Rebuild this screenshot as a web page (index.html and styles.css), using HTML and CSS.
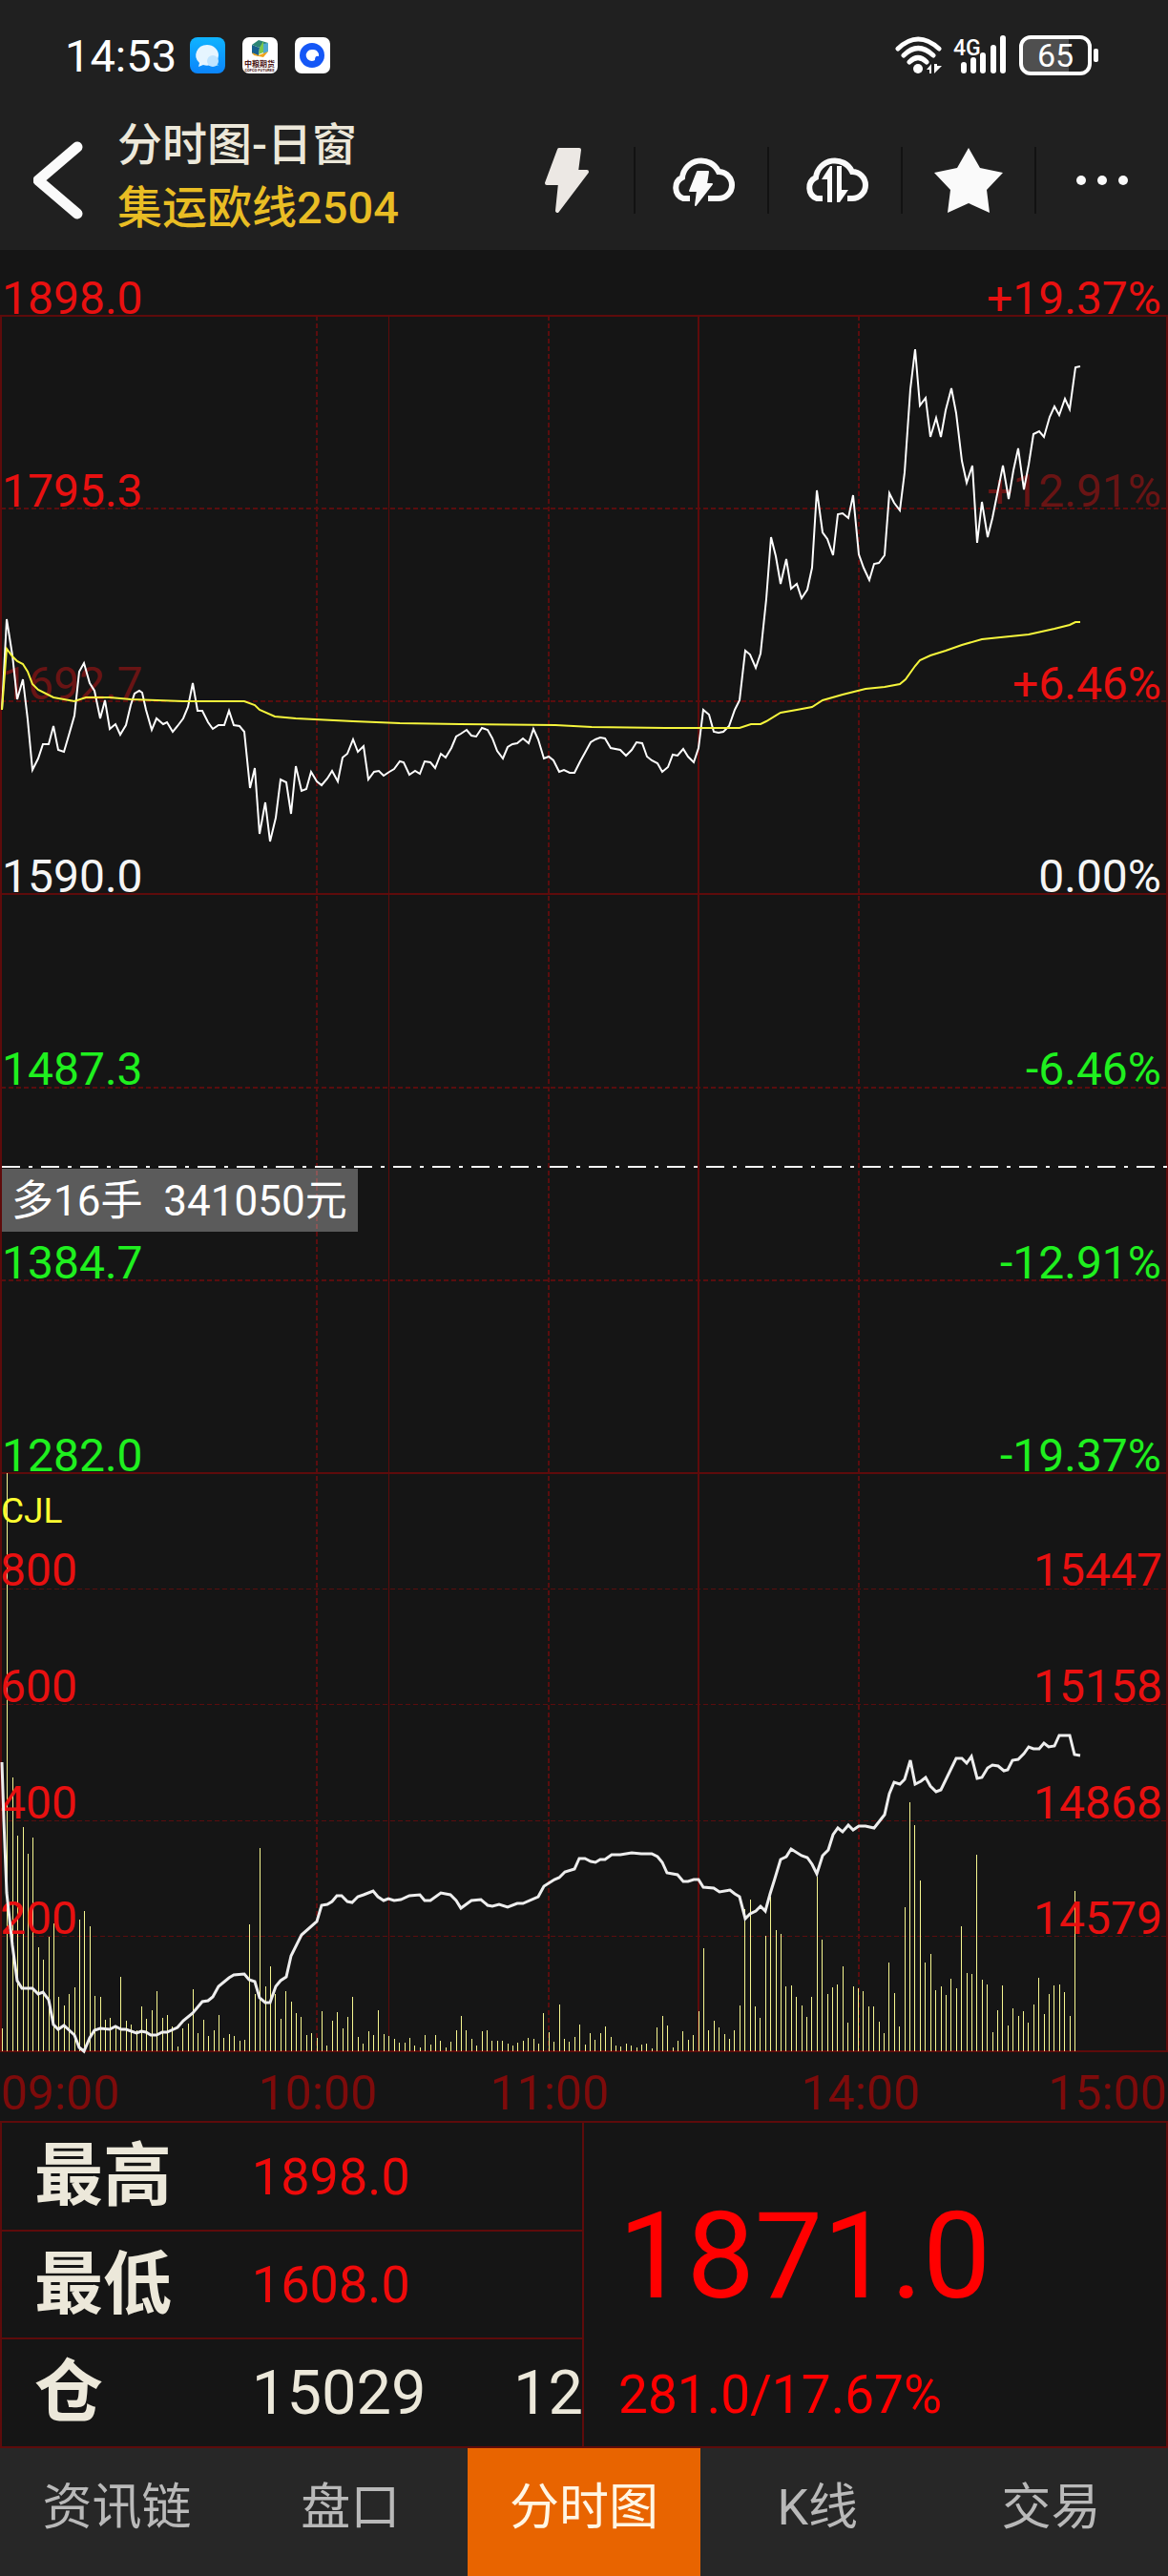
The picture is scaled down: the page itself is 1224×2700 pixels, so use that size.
FILE: index.html
```html
<!DOCTYPE html>
<html lang="zh-CN">
<head>
  <meta charset="UTF-8" />
  <meta name="viewport" content="width=device-width, initial-scale=1.0"/>
  <title>分时图-日窗</title>
  <link rel="stylesheet" href="styles.css">
</head>
<body>

  <header class="header">
    <div class="status-bar">
      <span class="clock">14:53</span>
      <div class="apps">
        <svg width="37" height="38" viewBox="0 0 37 38">
          <defs>
            <linearGradient id="chat-bg" x1="0" y1="0" x2="0" y2="1">
              <stop offset="0" stop-color="#0fb4ff"/><stop offset="1" stop-color="#0b84fb"/>
            </linearGradient>
          </defs>
          <rect width="37" height="38" rx="8" fill="url(#chat-bg)"/>
          <path d="M22 30H30L28 26Z" fill="#5cc0ff"/>
          <path d="M18 8a12 11 0 0 1 12 11a12 11 0 0 1-16 10L9 31L10 27A12 11 0 0 1 18 8Z" fill="#e6f5ff"/>
          <circle cx="24" cy="25" r="6" fill="#bfe4ff"/>
        </svg>
        <svg width="37" height="38" viewBox="0 0 37 38">
          <rect width="37" height="38" rx="7" fill="#fff"/>
          <path d="M10 8L18 11L17 20L10 17Z" fill="#17608f"/>
          <path d="M10 8L17 3L27 6L18 11Z" fill="#2b8575"/>
          <path d="M18 11L22 4L22 16L17 18Z" fill="#7cc84c"/>
          <path d="M22 7L27 6L27 15L22 18Z" fill="#4fa8d0"/>
          <path d="M10 16L17 19L27 15L22 21L12 19Z" fill="#f0a41c"/>
          <text class="app-name" x="18" y="31">中粮期货</text>
          <text class="app-sub" x="18" y="36">COFCO FUTURES</text>
        </svg>
        <svg width="37" height="38" viewBox="0 0 37 38">
          <rect width="37" height="38" rx="7" fill="#fff"/>
          <ellipse cx="18" cy="19" rx="13" ry="13" fill="#1557f6"/>
          <path d="M18 13a6 6 0 0 1 7 7q-4-1-4 4a6 6 0 1 1-3-11Z" fill="#fff"/>
        </svg>
      </div>
      <div class="signals">
        <svg width="50" height="42" viewBox="0 0 50 42" fill="none" stroke="#fff" stroke-width="5" stroke-linecap="round">
          <path d="M3 14Q24-6 46 14M9 21Q24 6 40 21M15 28Q24 19 33 28"/>
          <ellipse cx="24" cy="35" rx="5" ry="5" fill="#fff" stroke="none"/>
          <path d="M33 36L38 30V40H36V36ZM41 30V40L49 32H44V30Z" fill="#fff" stroke="none"/>
        </svg>
        <svg width="58" height="42" viewBox="0 0 58 42">
          <text class="net-type" x="0" y="21">4G</text>
          <path d="M11 31V37M21 26V37M31 21V37M42 13V37M52 3V37" stroke="#fff" stroke-width="6" stroke-linecap="round"/>
        </svg>
        <svg width="84" height="44" viewBox="0 0 84 44">
          <path d="M10 4H52V40H10Q3 39 3 32V12Q3 5 10 4Z" fill="#4f4f4f"/>
          <rect x="2" y="3" width="72" height="38" rx="10" fill="none" stroke="#fff" stroke-width="4"/>
          <rect x="78" y="15" width="5" height="14" rx="2" fill="#fff"/>
          <text class="battery" x="38" y="34">65</text>
        </svg>
      </div>
    </div>

    <div class="toolbar">
      <button class="back" aria-label="返回">
        <svg width="52" height="82" viewBox="0 0 52 82">
          <path d="M46 6L5 41L46 76" fill="none" stroke="#fafafa" stroke-width="11" stroke-linecap="round" stroke-linejoin="round"/>
        </svg>
      </button>
      <div class="titles">
        <h1>分时图-日窗</h1>
        <p>集运欧线2504</p>
      </div>
      <div class="actions">
        <button aria-label="闪电下单">
          <svg width="46" height="68" viewBox="0 0 46 68">
            <path d="M15 2H36L33 25H44L13 66L16 37H2Z" fill="#ece8e4" stroke="#ece8e4" stroke-width="4" stroke-linejoin="round"/>
          </svg>
        </button>
        <button aria-label="云条件单">
          <svg width="72" height="54" viewBox="0 0 72 54">
            <path d="M24 46H17A12 12 0 0 1 16 24A20 20 0 0 1 54 18A14 14 0 0 1 54 46H43" fill="none" stroke="#fafafa" stroke-width="6"/>
            <path d="M32 18H43L41 31H47L30 53L32 38H24Z" fill="#fafafa" stroke="#fafafa" stroke-width="2" stroke-linejoin="round"/>
          </svg>
        </button>
        <button aria-label="云止损">
          <svg width="72" height="54" viewBox="0 0 72 54">
            <path d="M23 46H17A12 12 0 0 1 16 24A20 20 0 0 1 54 18A14 14 0 0 1 54 46H49" fill="none" stroke="#fafafa" stroke-width="6"/>
            <path d="M33 12V50H28V26H22L31 12ZM38 12H43V37H50L41 50H38Z" fill="#fafafa"/>
          </svg>
        </button>
        <button aria-label="自选">
          <svg width="72" height="68" viewBox="0 0 72 68">
            <path d="M36 0L48 21L72 26L55 44L58 68L36 58L14 68L17 44L0 26L24 21Z" fill="#fafafa"/>
          </svg>
        </button>
        <button aria-label="更多">
          <svg width="54" height="10" viewBox="0 0 54 10" fill="#fafafa">
            <circle cx="5" cy="5" r="5"/><circle cx="27" cy="5" r="5"/><circle cx="49" cy="5" r="5"/>
          </svg>
        </button>
      </div>
    </div>
  </header>

  <main>
    <svg class="chart" viewBox="0 262 1224 1961">
      <!-- grid -->
      <path class="grid dashed" d="M1 533H1223M1 735H1223M1 1140H1223M1 1342H1223"/>
      <path class="grid dashed" d="M332 331V2150M575 331V2150M900 331V2150"/>
      <path class="grid dashed thin" d="M1 1665H1223M1 1786H1223M1 1908H1223M1 2029H1223"/>
      <path class="grid" d="M1 331H1223V2150H1ZM1 937H1223M1 1544H1223M732 331V2150"/>
      <path class="grid thin" d="M407 331V2150"/>

      <path id="volume" class="volume"/>

      <!-- price axis -->
      <g class="up">
        <text x="2" y="329">1898.0</text>
        <text x="2" y="531">1795.3</text>
        <text class="dim" x="2" y="733">1692.7</text>
      </g>
      <text class="flat" x="2" y="935">1590.0</text>
      <g class="down">
        <text x="2" y="1137">1487.3</text>
        <text x="2" y="1340">1384.7</text>
        <text x="2" y="1542">1282.0</text>
      </g>

      <!-- percent axis -->
      <g class="up end">
        <text x="1217" y="329">+19.37%</text>
        <text class="dim" x="1217" y="531">+12.91%</text>
        <text x="1217" y="733">+6.46%</text>
      </g>
      <text class="flat end" x="1217" y="935">0.00%</text>
      <g class="down end">
        <text x="1217" y="1137">-6.46%</text>
        <text x="1217" y="1340">-12.91%</text>
        <text x="1217" y="1542">-19.37%</text>
      </g>

      <!-- volume and open interest axes -->
      <text class="indicator" x="1" y="1596">CJL</text>
      <g class="up">
        <text x="0" y="1662">800</text>
        <text x="0" y="1784">600</text>
        <text x="0" y="1906">400</text>
        <text x="0" y="2027">200</text>
      </g>
      <g class="up end">
        <text x="1218" y="1662">15447</text>
        <text x="1218" y="1784">15158</text>
        <text x="1218" y="1906">14868</text>
        <text x="1218" y="2027">14579</text>
      </g>

      <polyline class="price" points="2,744 7,649 13,687 18,733 24,712 29,754 34,807 40,795 45,780 51,780 56,761 61,786 67,788 72,771 78,750 83,704 88,695 94,716 99,724 105,753 110,734 115,764 121,759 126,770 132,760 137,739 141,727 146,724 149,726 153,744 159,765 164,753 171,759 175,757 181,767 186,761 192,753 197,741 202,716 207,745 212,745 218,757 223,764 229,760 235,760 240,745 245,760 251,761 256,767 262,826 267,805 272,874 278,841 283,882 289,857 294,817 300,820 305,853 310,803 316,829 321,827 326,809 332,819 337,823 343,816 348,808 354,819 359,794 364,790 370,775 375,788 381,782 386,817 392,809 397,808 402,813 408,809 413,806 419,798 423,799 429,812 435,808 440,811 445,798 451,799 456,805 462,790 467,794 473,784 478,772 483,769 489,765 494,771 499,772 505,763 511,765 516,774 521,787 527,795 532,783 537,780 542,779 548,774 554,779 559,764 564,775 570,795 575,793 580,797 586,809 591,807 597,810 602,810 608,798 613,789 619,778 624,775 629,773 634,774 640,784 650,786 656,792 662,786 667,778 673,779 678,793 683,797 689,800 694,809 700,804 705,791 710,792 716,785 721,793 727,799 732,784 737,744 743,749 748,767 753,768 758,767 764,761 770,744 775,734 781,682 786,686 792,700 797,685 803,628 808,563 813,583 818,612 824,586 829,617 835,612 840,627 846,618 851,595 856,514 862,558 867,565 873,582 878,539 883,538 889,543 894,519 900,581 905,595 911,608 916,591 921,590 927,582 932,517 937,527 943,535 948,495 954,408 959,366 964,425 970,417 975,458 981,438 986,458 991,430 997,407 1002,433 1008,483 1013,506 1019,488 1024,569 1029,526 1035,563 1040,543 1046,513 1051,488 1057,523 1062,493 1067,470 1073,513 1078,487 1083,455 1089,452 1094,458 1100,437 1105,426 1110,435 1116,418 1121,429 1127,385 1132,384"/>
      <polyline class="average" points="2,744 7,680 13,688 18,693 24,696 29,704 34,717 40,723 56,731 78,735 90,731 115,731 137,733 192,735 256,735 267,739 272,744 288,751 310,753 370,756 419,758 482,759 582,760 620,762 697,763 775,763 787,759 797,759 803,756 818,747 835,744 851,741 862,734 883,728 907,722 927,720 943,717 949,712 959,698 964,692 975,687 991,682 1008,676 1029,670 1078,665 1105,659 1121,655 1127,652 1132,652"/>
      <polyline class="interest" points="2,1847 4,1908 7,1984 13,2039 18,2076 23,2084 34,2084 40,2090 45,2088 51,2096 56,2122 61,2127 67,2123 78,2133 83,2146 88,2150 94,2136 99,2128 105,2126 115,2127 121,2124 127,2127 132,2127 143,2131 148,2129 153,2130 158,2133 164,2133 170,2130 175,2130 186,2125 192,2118 202,2110 212,2098 218,2097 223,2093 229,2082 240,2073 245,2070 256,2069 261,2075 267,2077 272,2094 278,2099 283,2099 289,2082 294,2076 300,2072 305,2050 316,2028 332,2014 337,1997 343,1996 348,1993 353,1987 358,1987 364,1993 369,1994 375,1988 381,1986 391,1982 396,1988 402,1992 407,1990 413,1992 420,1991 429,1987 440,1986 445,1992 451,1992 462,1984 472,1986 478,1992 483,2000 494,1992 504,1991 511,1997 516,1998 523,1996 532,1999 542,1995 548,1995 564,1988 570,1977 581,1970 586,1968 592,1962 602,1959 607,1948 613,1948 619,1951 624,1952 629,1949 634,1949 641,1944 650,1944 662,1942 672,1943 683,1943 689,1946 694,1952 699,1963 710,1965 716,1972 721,1972 727,1970 732,1970 737,1978 748,1979 754,1983 765,1981 770,1985 775,1988 781,2011 786,2006 792,2003 797,1998 802,2003 807,1985 812,1969 818,1949 824,1946 829,1938 840,1945 846,1947 851,1954 856,1964 862,1945 868,1939 873,1923 878,1916 883,1920 889,1913 894,1918 900,1914 907,1914 916,1916 927,1902 932,1880 937,1868 943,1870 948,1865 954,1845 959,1870 965,1867 970,1863 975,1872 981,1878 986,1876 1002,1843 1008,1843 1013,1848 1018,1841 1024,1864 1029,1863 1035,1853 1040,1850 1046,1851 1052,1856 1056,1855 1061,1845 1067,1844 1073,1838 1078,1831 1083,1833 1089,1833 1094,1827 1099,1831 1105,1830 1110,1819 1121,1819 1126,1839 1132,1840"/>

      <!-- open position -->
      <path class="position-line" d="M2 1223H1224"/>
      <rect class="position-box" x="2" y="1225" width="373" height="66"/>
      <text class="position-text" x="12" y="1274">多16手&#160;&#160;341050元</text>

      <g class="time">
        <text class="start" x="1" y="2211">09:00</text>
        <text x="333" y="2211">10:00</text>
        <text x="576" y="2211">11:00</text>
        <text x="902" y="2211">14:00</text>
        <text class="end" x="1223" y="2211">15:00</text>
      </g>
    </svg>

    <section class="quote">
      <table>
        <colgroup>
          <col class="col-name"><col class="col-value"><col>
        </colgroup>
        <tr><th scope="row">最高</th><td class="red" colspan="2">1898.0</td></tr>
        <tr><th scope="row">最低</th><td class="red" colspan="2">1608.0</td></tr>
        <tr><th scope="row">仓</th><td>15029</td><td>12</td></tr>
      </table>
      <div class="last">
        <strong>1871.0</strong>
        <span>281.0/17.67%</span>
      </div>
    </section>
  </main>

  <nav class="tabs">
    <a href="#">资讯链</a>
    <a href="#">盘口</a>
    <a href="#" class="active">分时图</a>
    <a href="#">K线</a>
    <a href="#">交易</a>
  </nav>

  <script src="chart.js"></script>
</body>
</html>
```

FILE: styles.css
```css
* {
  box-sizing: border-box;
}

body {
  margin: 0;
  background-color: #151515;
  color: #fff;
  font-family: Roboto, "Noto Sans CJK SC", sans-serif;
}

button {
  padding: 0;
  border: none;
  background: none;
  cursor: pointer;
}

svg {
  display: block;
}

/* Header */
.header {
  background-color: #202020;
}

.status-bar {
  display: flex;
  align-items: center;
  height: 116px;
  padding: 0 72px 0 68px;
}

.clock {
  width: 131px;
  font-size: 47px;
}

.apps {
  display: flex;
  gap: 18px;
}

.app-name {
  font-size: 8px;
  font-weight: bold;
  fill: #4a1414;
  text-anchor: middle;
}

.app-sub {
  font-size: 4px;
  font-weight: bold;
  fill: #4a1414;
  text-anchor: middle;
}

.signals {
  display: flex;
  align-items: center;
  gap: 11px;
  margin-left: auto;
}

.net-type {
  font-size: 23px;
  font-weight: 500;
  fill: #fff;
}

.battery {
  font-size: 34px;
  fill: #fff;
  text-anchor: middle;
}

.toolbar {
  display: flex;
  align-items: center;
  height: 146px;
}

.back {
  flex: none;
  margin: 0 36px 0 35px;
}

.titles {
  flex: 1;
  padding-bottom: 8px;
  white-space: nowrap;
}

.titles h1,
.titles p {
  margin: 0;
  line-height: 66px;
  font-size: 47px;
  font-weight: 500;
}

.titles h1 {
  color: #ece8da;
}

.titles p {
  color: #e9bd24;
}

.actions {
  display: flex;
}

.actions button {
  display: flex;
  align-items: center;
  justify-content: center;
  width: 140px;
  height: 70px;
}

.actions button + button {
  border-left: 2px solid #121212;
}

/* Chart */
.chart {
  width: 100%;
  height: auto;
  font-size: 48px;
}

.grid {
  fill: none;
  stroke: #5e0b0b;
  stroke-width: 2;
}

.dashed {
  stroke: #5a0d0e;
  stroke-dasharray: 5 3;
}

.thin {
  stroke-width: 1;
  shape-rendering: crispEdges;
}

.volume {
  stroke: #f6f690;
  stroke-width: 1;
  shape-rendering: crispEdges;
}

.up {
  fill: #e81010;
}

.flat {
  fill: #f5f5f5;
}

.down {
  fill: #1ff01f;
}

.dim {
  fill: #691414;
}

.indicator {
  font-size: 37px;
  fill: #ffff30;
}

.price,
.average,
.interest {
  fill: none;
  stroke: #fff;
  stroke-width: 2;
}

.average {
  stroke: #f5f53c;
}

.interest {
  stroke: #eee;
  stroke-width: 3;
}

.position-line {
  stroke: #f5f5f5;
  stroke-width: 2;
  stroke-dasharray: 19 9 4 9;
}

.position-box {
  fill: #fff;
  fill-opacity: 0.3;
}

.position-text {
  font-size: 44px;
  fill: #fff;
}

.time {
  font-size: 50px;
  fill: #7d0b0b;
  text-anchor: middle;
}

.time .start {
  text-anchor: start;
}

.end,
.time .end {
  text-anchor: end;
}

/* Quote */
.quote {
  display: grid;
  grid-template-columns: 1fr 1fr;
  border: 2px solid #5e0b0b;
}

.quote table {
  width: 100%;
  table-layout: fixed;
  border-collapse: collapse;
  border-right: 2px solid #5e0b0b;
}

.col-name {
  width: 43%;
}

.col-value {
  width: 45%;
}

.quote tr + tr {
  border-top: 2px solid #5e0b0b;
}

.quote th,
.quote td {
  height: 113px;
  padding: 0;
  overflow: hidden;
  color: #ece8da;
  text-align: left;
  white-space: nowrap;
}

.quote th {
  padding-left: 34px;
  font-size: 72px;
  line-height: 80px;
}

.quote td {
  font-size: 65px;
  font-weight: normal;
}

.quote td.red {
  color: #ee0a0a;
  font-size: 54px;
}

.last {
  display: flex;
  flex-direction: column;
  justify-content: center;
  padding: 60px 0 0 36px;
  color: #f00;
}

.last strong {
  font-size: 127px;
  line-height: 130px;
  font-weight: normal;
}

.last span {
  margin-top: 40px;
  font-size: 55px;
  line-height: 80px;
}

/* Bottom tabs */
.tabs {
  display: flex;
  background-color: #272727;
}

.tabs a {
  flex: 1;
  height: 134px;
  line-height: 126px;
  color: #b9b9b9;
  font-size: 52px;
  text-align: center;
  text-decoration: none;
}

.tabs .active {
  background-color: #e86400;
  color: #fff6e4;
}
```

FILE: chart.js
```js
// one bar per minute, heights in chart units
const volumes = [
  24, 606, 287, 226, 235, 207, 224, 109, 96, 120, 134, 57, 48, 60, 67, 138, 147, 131, 58, 57,
  33, 35, 25, 78, 32, 28, 22, 47, 34, 43, 63, 35, 38, 26, 5, 24, 29, 65, 19, 33,
  16, 22, 38, 14, 18, 16, 11, 12, 133, 60, 213, 68, 89, 60, 34, 63, 52, 40, 36, 17,
  19, 14, 42, 6, 32, 41, 24, 36, 57, 15, 8, 21, 17, 43, 18, 16, 13, 9,
  9, 14, 6, 4, 17, 7, 17, 11, 4, 10, 22, 37, 22, 13, 6, 21, 22, 11, 11, 11,
  8, 6, 9, 11, 14, 13, 8, 40, 20, 10, 49, 13, 10, 15, 28, 7, 19, 12, 19, 26,
  15, 6, 5, 8, 6, 4, 7, 8, 3, 25, 37, 27, 4, 11, 21, 12, 17, 42, 108, 22,
  32, 25, 18, 13, 22, 48, 149, 159, 47, 35, 121, 162, 127, 123,
  68, 69, 57, 48, 36, 57, 183, 117, 60, 67, 70, 89, 30, 68, 66, 63, 47, 47, 31, 19,
  93, 61, 26, 151, 261, 237, 179, 93, 102, 64, 68, 59, 76, 66, 131, 82, 81, 206, 75, 70,
  20, 43, 69, 27, 45, 37, 42, 30, 49, 77, 39, 60, 69, 70, 62, 37, 168
];

const baseline = 2150;
const firstBar = 2;
const lastBar = 1126;

function drawVolume() {
  const step = (lastBar - firstBar) / (volumes.length - 1);
  const d = volumes.map((height, i) => {
    const x = Math.round(firstBar + i * step) + 0.5;
    return `M${x} ${baseline}V${baseline - height}`;
  });
  document.getElementById("volume").setAttribute("d", d.join(""));
}

drawVolume();
```
